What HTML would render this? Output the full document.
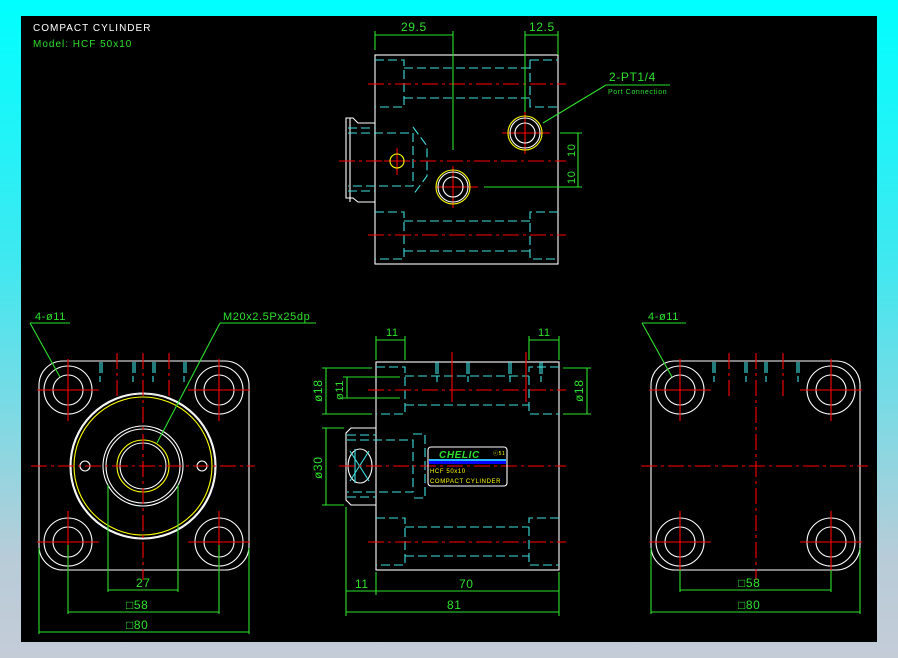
<!DOCTYPE html>
<html><head><meta charset="utf-8"><style>
html,body{margin:0;padding:0;}
body{width:898px;height:658px;overflow:hidden;background:linear-gradient(#00ffff 0%,#40e8f0 40%,#b8ccd8 85%,#c4ccd8 100%);position:relative;}
svg{position:absolute;left:0;top:0;}
text{font-family:"Liberation Sans",sans-serif;letter-spacing:0.6px;}
</style></head><body>
<svg width="898" height="658" viewBox="0 0 898 658" xmlns="http://www.w3.org/2000/svg">
<rect x="21" y="16" width="856" height="626" fill="#000"/>
<g fill="none" stroke-width="1.1">
<text x="33" y="31" fill="#fff" font-size="10" stroke="none" style="letter-spacing:1px">COMPACT  CYLINDER</text>
<text x="33" y="47" fill="#2de02d" font-size="10" stroke="none" style="letter-spacing:1px">Model:  HCF  50x10</text>

<!-- TOP VIEW -->
<g stroke="#fff">
<rect x="375" y="55" width="183" height="209"/>
<path d="M375 123 H358 L353 118 H346 V198 H353 L358 202 H375"/>
<path d="M350 118 V202"/>
</g>
<g stroke="#40e0e0" stroke-dasharray="9,4">
<path d="M375 60 H404 V107 H375 M404 68 H530 M404 98 H530 M530 60 H558 M530 60 V107 H558"/>
<path d="M375 212 H404 V259 H375 M404 221 H530 M404 251 H530 M558 212 H530 V259 H558"/>
<path d="M348 133 H413 V186 H348 M348 128 H375 M348 191 H375"/>
<path d="M413 127 L427 146 L427 176 L413 195"/>
</g>
<g stroke="#f00" stroke-dasharray="16,4,3,4">
<path d="M368 84 H566 M368 235 H566 M339 161 H566"/>
</g>
<g stroke="#f00">
<path d="M436 187 H478 M453 166 V208 M502 133 H550 M525 112 V154 M384 161 H410 M397 148 V175"/>
</g>
<g stroke="#fff">
<circle cx="453" cy="187" r="10"/><circle cx="525" cy="133" r="10"/><circle cx="525" cy="133" r="15"/><circle cx="453" cy="187" r="15"/>
</g>
<g stroke="#ff0">
<circle cx="453" cy="187" r="17"/><circle cx="525" cy="133" r="17"/><circle cx="397" cy="161" r="7"/>
</g>
<g stroke="#2de02d">
<path d="M375 50 V31 M453 150 V31 M375 35 H453 M525 112 V31 M558 55 V31 M525 35 H558"/>
<path d="M560 133 H582 M484 187 H582 M578 133 V187"/>
<path d="M606 85 H670 M606 85 L543 123"/>
</g>
<text x="401" y="31" fill="#2de02d" font-size="12">29.5</text>
<text x="529" y="31" fill="#2de02d" font-size="12">12.5</text>
<text x="609" y="81" fill="#2de02d" font-size="12">2-PT1/4</text>
<text x="608" y="94" fill="#2de02d" font-size="7">Port Connection</text>
<text transform="translate(575,157) rotate(-90)" fill="#2de02d" font-size="11">10</text>
<text transform="translate(575,184) rotate(-90)" fill="#2de02d" font-size="11">10</text>

<!-- LEFT FRONT VIEW -->
<path stroke="#fff" d="M63 361 H225 A24 24 0 0 1 249 385 V546 A24 24 0 0 1 225 570 H63 A24 24 0 0 1 39 546 V385 A24 24 0 0 1 63 361 Z"/>
<g stroke="#fff">
<circle cx="68" cy="390" r="24"/><circle cx="68" cy="390" r="15"/>
<circle cx="219" cy="390" r="24"/><circle cx="219" cy="390" r="15"/>
<circle cx="68" cy="542" r="24"/><circle cx="68" cy="542" r="15"/>
<circle cx="219" cy="542" r="24"/><circle cx="219" cy="542" r="15"/>
<circle cx="143" cy="466" r="73"/><circle cx="143" cy="466" r="72"/>
<circle cx="143" cy="466" r="40"/><circle cx="143" cy="466" r="37"/><circle cx="143" cy="466" r="23"/>
<circle cx="85" cy="466" r="5"/><circle cx="202" cy="466" r="5"/>
</g>
<g stroke="#ff0"><circle cx="143" cy="466" r="69"/><circle cx="143" cy="466" r="26"/></g>
<g stroke="#f00" stroke-dasharray="16,4,3,4"><path d="M31 466 H255 M143 353 V580 M117 353 V400 M169 353 V400"/></g>
<g stroke="#f00"><path d="M37 390 H99 M68 359 V421 M188 390 H250 M219 359 V421 M37 542 H99 M68 511 V573 M188 542 H250 M219 511 V573"/></g>
<g stroke="#40e0e0"><path d="M100 362 V373 M102 362 V373 M133 362 V373 M135 362 V373 M153 362 V373 M155 362 V373 M184 362 V373 M186 362 V373 M100 376 V382 M133 376 V382 M153 376 V382 M184 376 V382"/></g>
<g stroke="#2de02d">
<path d="M108 485 V592 M178 485 V592 M108 590 H178 M68 545 V614 M219 545 V614 M68 612 H219 M39 548 V634 M249 548 V634 M39 632 H249"/>
<path d="M30 323 H70 M30 323 L60 377 M220 323 H316 M220 323 L157 443"/>
</g>
<text x="136" y="587" fill="#2de02d" font-size="12">27</text>
<text x="126" y="609" fill="#2de02d" font-size="12">□58</text>
<text x="126" y="629" fill="#2de02d" font-size="12">□80</text>
<text x="35" y="320" fill="#2de02d" font-size="11">4-ø11</text>
<text x="223" y="320" fill="#2de02d" font-size="11">M20x2.5Px25dp</text>

<!-- MIDDLE VIEW -->
<g stroke="#fff">
<rect x="376" y="362" width="183" height="208"/>
<path d="M376 428 H351 L346 433 V500 L351 505 H376"/>
<ellipse cx="360" cy="466" rx="12" ry="17"/>
</g>
<path stroke="#40e0e0" d="M350 451 L369 481 M350 481 L369 451 M355 449 V483"/>
<g stroke="#40e0e0" stroke-dasharray="9,4">
<path d="M376 367 H405 V414 H376 M405 376 H529 M405 405 H529 M559 367 H529 V414 H559"/>
<path d="M376 518 H405 V565 H376 M405 527 H529 M405 556 H529 M559 518 H529 V565 H559"/>
<path d="M347 440 H413 V492 H347 M347 435 H376 M347 497 H376 M413 434 H425 V498 H413"/>
</g>
<g stroke="#40e0e0"><path d="M436 362 V374 M438 362 V374 M467 362 V374 M469 362 V374 M509 362 V374 M511 362 V374 M540 362 V374 M542 362 V374 M437 376 V382 M468 376 V382 M510 376 V382 M541 376 V382"/></g>
<g stroke="#f00" stroke-dasharray="16,4,3,4"><path d="M368 390 H566 M368 542 H566 M339 466 H566"/></g>
<g stroke="#f00"><path d="M452 352 V402 M526 352 V402"/></g>
<rect x="428" y="447" width="79" height="39" rx="3" stroke="#fff"/>
<rect x="429" y="459" width="77" height="2" fill="#2ab8ff" stroke="none"/>
<rect x="429" y="461" width="77" height="3" fill="#0000ff" stroke="none"/>
<text x="439" y="458" fill="#2de02d" font-size="10" font-weight="bold" font-style="italic" stroke="none">CHELIC</text>
<text x="493" y="455" fill="#ff0" font-size="5" stroke="none">ⓒ51</text>
<text x="430" y="473" fill="#ff0" font-size="6" stroke="none">HCF 50x10</text>
<text x="430" y="483" fill="#ff0" font-size="6" stroke="none">COMPACT CYLINDER</text>
<g stroke="#2de02d">
<path d="M376 360 V336 M405 360 V336 M376 340 H405 M529 360 V336 M559 360 V336 M529 340 H559"/>
<path d="M372 368 H322 M372 414 H322 M326 368 V414 M400 377 H343 M400 398 H343 M347 377 V398 M563 368 H591 M563 414 H591 M587 368 V414"/>
<path d="M344 428 H322 M344 505 H322 M326 428 V505"/>
<path d="M346 507 V616 M376 572 V595 M559 572 V616 M346 591 H559 M346 612 H559"/>
</g>
<text x="386" y="336" fill="#2de02d" font-size="11">11</text>
<text x="538" y="336" fill="#2de02d" font-size="11">11</text>
<text x="355" y="588" fill="#2de02d" font-size="12">11</text>
<text x="459" y="588" fill="#2de02d" font-size="12">70</text>
<text x="447" y="609" fill="#2de02d" font-size="12">81</text>
<text transform="translate(322,402) rotate(-90)" fill="#2de02d" font-size="12">ø18</text>
<text transform="translate(343,400) rotate(-90)" fill="#2de02d" font-size="11">ø11</text>
<text transform="translate(322,479) rotate(-90)" fill="#2de02d" font-size="12">ø30</text>
<text transform="translate(583,402) rotate(-90)" fill="#2de02d" font-size="12">ø18</text>

<!-- RIGHT VIEW -->
<path stroke="#fff" d="M675 361 H836 A24 24 0 0 1 860 385 V546 A24 24 0 0 1 836 570 H675 A24 24 0 0 1 651 546 V385 A24 24 0 0 1 675 361 Z"/>
<g stroke="#fff">
<circle cx="680" cy="390" r="24"/><circle cx="680" cy="390" r="15"/>
<circle cx="831" cy="390" r="24"/><circle cx="831" cy="390" r="15"/>
<circle cx="680" cy="542" r="24"/><circle cx="680" cy="542" r="15"/>
<circle cx="831" cy="542" r="24"/><circle cx="831" cy="542" r="15"/>
</g>
<g stroke="#f00" stroke-dasharray="16,4,3,4"><path d="M641 466 H868 M756 353 V580 M729 353 V400 M783 353 V400"/></g>
<g stroke="#f00"><path d="M649 390 H711 M680 359 V421 M800 390 H862 M831 359 V421 M649 542 H711 M680 511 V573 M800 542 H862 M831 511 V573"/></g>
<g stroke="#40e0e0"><path d="M713 362 V373 M715 362 V373 M745 362 V373 M747 362 V373 M765 362 V373 M767 362 V373 M797 362 V373 M799 362 V373 M714 376 V382 M746 376 V382 M766 376 V382 M798 376 V382"/></g>
<g stroke="#2de02d">
<path d="M680 570 V592 M831 570 V592 M680 590 H831 M651 548 V614 M860 548 V614 M651 612 H860"/>
<path d="M642 323 H686 M642 323 L672 377"/>
</g>
<text x="738" y="587" fill="#2de02d" font-size="12">□58</text>
<text x="738" y="609" fill="#2de02d" font-size="12">□80</text>
<text x="648" y="320" fill="#2de02d" font-size="11">4-ø11</text>
</g>
</svg>
</body></html>
